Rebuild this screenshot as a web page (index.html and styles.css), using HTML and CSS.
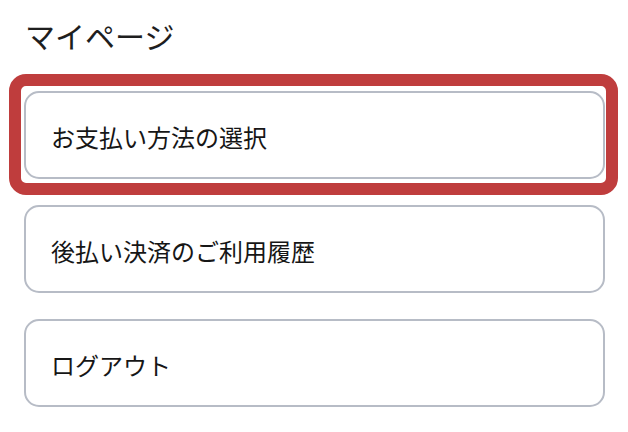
FILE: index.html
```html
<!DOCTYPE html>
<html lang="ja">
<head>
<meta charset="utf-8">
<title>マイページ</title>
<link rel="stylesheet" href="styles.css">
</head>
<body>
<main class="page">
  <h1 class="title">マイページ</h1>
  <ul class="menu">
    <li class="menu-item highlight"><a class="menu-button" href="#">お支払い方法の選択</a></li>
    <li class="menu-item"><a class="menu-button" href="#">後払い決済のご利用履歴</a></li>
    <li class="menu-item"><a class="menu-button" href="#">ログアウト</a></li>
  </ul>
</main>
</body>
</html>
```

FILE: styles.css
```css
html, body {
  margin: 0;
  padding: 0;
  background: #ffffff;
}

body {
  font-family: "Noto Sans CJK JP", "Noto Sans", sans-serif;
  color: #161616;
}

.page {
  padding: 15px 23px 0 24px;
}

.title {
  margin: 0 0 19px 1px;
  font-size: 30px;
  line-height: 41px;
  font-weight: 400;
  color: #1e1e1e;
}

.menu {
  list-style: none;
  margin: 0;
  padding: 0;
  display: flex;
  flex-direction: column;
  gap: 26px;
}

.menu-item.highlight {
  margin: -1px -13px -16px -15px;
  border: 12px solid #bf3d3d;
  border-radius: 17px;
  padding: 5px 1px 4px 3px;
}

.menu-button {
  display: flex;
  align-items: center;
  box-sizing: border-box;
  height: 88px;
  padding: 4px 0 0 25px;
  border: 2px solid #b7bcc6;
  border-radius: 15px;
  background: #ffffff;
  color: #161616;
  text-decoration: none;
  font-size: 24px;
  line-height: 1;
}
```
